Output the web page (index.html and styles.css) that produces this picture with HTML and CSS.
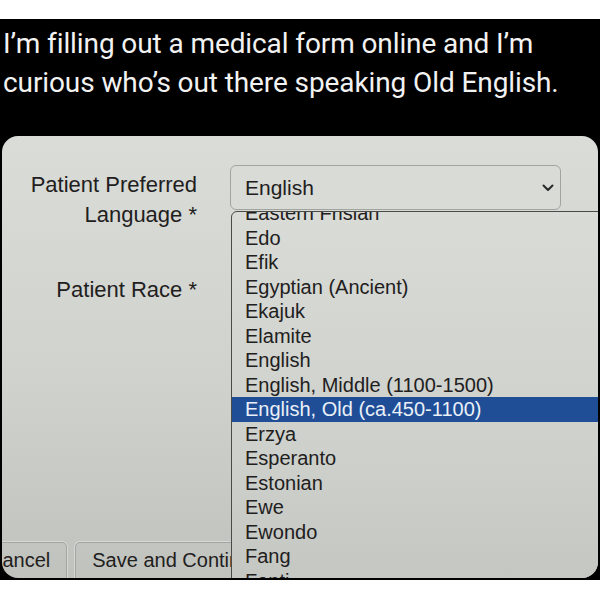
FILE: index.html
```html
<!DOCTYPE html>
<html lang="en">
<head>
<meta charset="utf-8">
<title>Old English</title>
<link rel="stylesheet" href="styles.css">
</head>
<body>
<div class="post">
  <p class="tweet">I’m filling out a medical form online and I’m<br>curious who’s out there speaking Old English.</p>
  <div class="photo">
    <div class="form">
      <div class="label">Patient Preferred<br>Language *</div>
      <div class="select">
        <span>English</span>
        <svg class="chev" width="12" height="8" viewBox="0 0 12 8"><path d="M1.5 1.5 L6 6 L10.5 1.5" fill="none" stroke="#2a2b28" stroke-width="2" stroke-linecap="round" stroke-linejoin="round"/></svg>
      </div>
      <div class="label">Patient Race *</div>
      <div class="select-hidden"></div>
    </div>
    <div class="actions">
      <div class="btn cancel">Cancel</div>
      <div class="btn save">Save and Continue</div>
    </div>
    <div class="dropdown">
      <ul class="options">
        <li>Eastern Frisian</li>
        <li>Edo</li>
        <li>Efik</li>
        <li>Egyptian (Ancient)</li>
        <li>Ekajuk</li>
        <li>Elamite</li>
        <li>English</li>
        <li>English, Middle (1100-1500)</li>
        <li class="selected">English, Old (ca.450-1100)</li>
        <li>Erzya</li>
        <li>Esperanto</li>
        <li>Estonian</li>
        <li>Ewe</li>
        <li>Ewondo</li>
        <li>Fang</li>
        <li>Fanti</li>
        <li>Faroese</li>
      </ul>
    </div>
  </div>
</div>
</body>
</html>
```

FILE: styles.css
```css
html, body {
  margin: 0;
  padding: 0;
  background: #ffffff;
}

.post {
  margin-top: 19px;
  height: 561px;
  box-sizing: border-box;
  padding-top: 5px;
  background: #000000;
  overflow: hidden;
}

.tweet {
  margin: 0;
  padding-left: 3px;
  font-family: "Roboto", "Liberation Sans", sans-serif;
  font-size: 28px;
  line-height: 39px;
  letter-spacing: -0.1px;
  color: #f2f2f2;
  white-space: nowrap;
}

.photo {
  position: relative;
  margin: 34px 2px 0;
  height: 442px;
  border-radius: 16px;
  overflow: hidden;
  background: linear-gradient(to bottom, #d9dcd7 0%, #cfd2cd 55%, #c0c2bd 100%);
  font-family: "Liberation Sans", Arial, sans-serif;
  color: #1f201d;
}

.form {
  display: grid;
  grid-template-columns: 195px 331px;
  column-gap: 33px;
  row-gap: 40px;
  padding-top: 29px;
  align-items: start;
}

.label {
  margin-top: 5px;
  text-align: right;
  font-size: 22px;
  line-height: 30px;
}

.select {
  height: 45px;
  box-sizing: border-box;
  display: flex;
  align-items: center;
  justify-content: space-between;
  padding: 0 6px 0 14px;
  border: 1px solid #a2a4a0;
  border-radius: 6px;
  background: #d8dbd6;
  font-size: 21px;
}

.chev {
  display: block;
}

.actions {
  display: flex;
  gap: 8px;
  margin-top: 237px;
  margin-left: -31px;
}

.btn {
  padding: 5px 16px 20px;
  border: 1px solid #a3a5a1;
  border-radius: 5px;
  font-size: 20px;
  line-height: 24px;
  white-space: nowrap;
  box-shadow: 0 0 0 1px rgba(255, 255, 255, 0.35);
}

.dropdown {
  position: absolute;
  left: 229px;
  top: 75px;
  right: -20px;
  bottom: -40px;
  border: 1px solid #4a4b48;
  border-top-left-radius: 6px;
  background: linear-gradient(to bottom, #d8dbd6 0%, #cdd0cb 60%, #c2c4bf 100%);
  overflow: hidden;
}

.options {
  list-style: none;
  margin: -11px 0 0;
  padding: 0;
}

.options li {
  padding-left: 13px;
  font-size: 20px;
  line-height: 24.5px;
  white-space: nowrap;
}

.options li.selected {
  background: #1f4e97;
  color: #eaf0f8;
}
```
